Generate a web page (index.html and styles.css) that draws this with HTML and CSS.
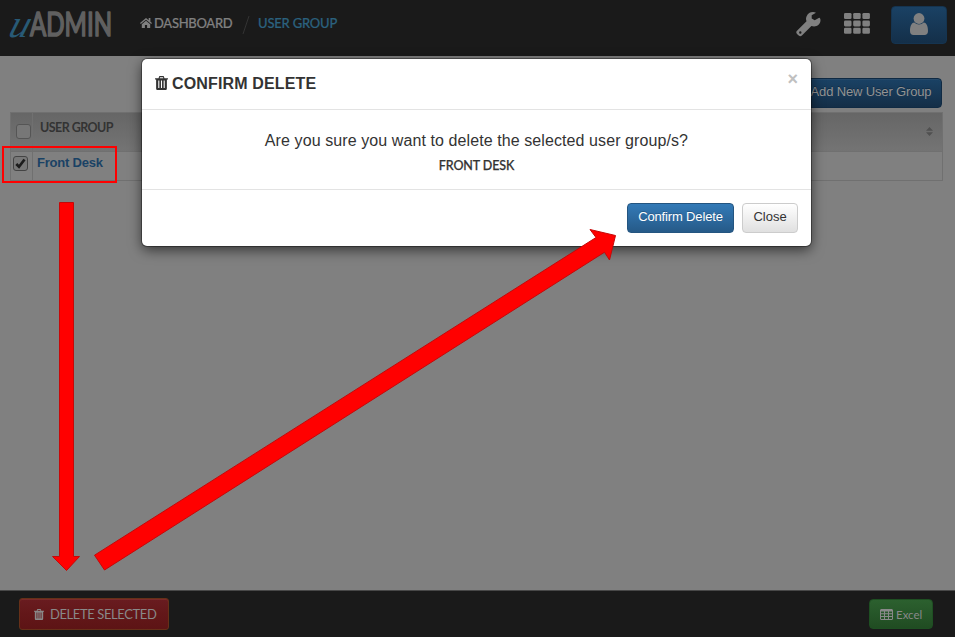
FILE: index.html
```html
<!DOCTYPE html>
<html lang="en">
<head>
<meta charset="utf-8">
<title>uAdmin - User Group</title>
<link rel="stylesheet" href="styles.css">
</head>
<body>
<div class="page">
  <header class="topbar">
    <svg class="logo" width="106" height="40" viewBox="0 0 106 40">
      <text class="logo-u" x="0" y="0" textLength="20" lengthAdjust="spacingAndGlyphs" transform="translate(0 29) skewX(-18)">u</text>
      <text class="logo-name" x="23" y="28" textLength="82" lengthAdjust="spacingAndGlyphs">ADMIN</text>
    </svg>
    <nav class="crumbs">
      <svg class="home" width="12" height="10" viewBox="0 0 12 10"><path d="M6 0 12 5 11.2 6 6 1.8.8 6 0 5zM8.7 0h1.7v3.7L8.7 2.4zM6 2.8l4.2 3.4V10H7.1V7H4.9v3H1.8V6.2z"/></svg>
      <a class="crumb">DASHBOARD</a>
      <svg class="slash" width="8" height="20" viewBox="0 0 8 20"><path d="M7 1 1 19"/></svg>
      <a class="crumb current">USER GROUP</a>
    </nav>
    <div class="tools">
      <svg class="wrench" width="25" height="25" viewBox="0 0 25 25"><path fill-rule="evenodd" d="M23.2 5.7l-4.5 2.6-3-1.7V3.2L20 .7C16.200-.8 12.100.6 10.500 4.500c-.7 1.600-.6 3.300 0 4.800L1 18.700c-1 1-1 2.200 0 3.200l1.700 1.700c1 1 2.200 1 3.200 0l9.500-9.500c4.500 1.700 9.100-1.200 9.100-6 0-1-.3-2.200-1.300-2.400zM4.300 19.300a1.200 1.200 0 1 1 0 2.400 1.200 1.200 0 0 1 0-2.400z"/></svg>
      <svg class="apps" width="26" height="21" viewBox="0 0 26 21"><g><rect width="7.500" height="6" rx="1.300"/><rect x="9.200" width="7.500" height="6" rx="1.300"/><rect x="18.400" width="7.500" height="6" rx="1.300"/><rect y="7.400" width="7.500" height="6" rx="1.300"/><rect x="9.200" y="7.400" width="7.500" height="6" rx="1.300"/><rect x="18.400" y="7.400" width="7.500" height="6" rx="1.300"/><rect y="14.800" width="7.500" height="6" rx="1.300"/><rect x="9.200" y="14.800" width="7.500" height="6" rx="1.300"/><rect x="18.400" y="14.800" width="7.500" height="6" rx="1.300"/></g></svg>
      <div class="user"><svg width="18" height="22" viewBox="0 0 18 22"><circle cx="9" cy="5.500" r="5.400"/><path d="M4.300 9.500C1.200 9.800 0 13.500 0 18c0 2.500 1.300 4 3.500 4h11c2.200 0 3.500-1.500 3.500-4 0-4.500-1.200-8.200-4.300-8.500a6.500 6.500 0 0 1-9.400 0z"/></svg></div>
    </div>
  </header>

  <main class="content">
    <div class="actions"><a class="btn add">Add New User Group</a></div>
    <div class="table">
      <div class="row head">
        <div class="cell pick"><span class="box"></span></div>
        <div class="cell label">USER GROUP</div>
        <svg class="sort" width="7" height="9" viewBox="0 0 7 9"><path d="M0 3.700 3.500 0 7 3.700zM0 5.300h7L3.500 9z"/></svg>
      </div>
      <div class="row item">
        <div class="cell pick"><span class="box checked"><svg width="11" height="11" viewBox="0 0 11 11"><path d="M1.300 6 4 8.700 9.500 1.500"/></svg></span></div>
        <div class="cell name">Front Desk</div>
      </div>
    </div>
  </main>

  <footer class="bottombar">
    <a class="delete"><svg class="bin" width="10" height="11" viewBox="0 0 12 13"><path fill-rule="evenodd" d="M4 0h4l.8 2H12v1.300h-1V11.500c0 1-.6 1.500-1.500 1.500h-7C1.600 13 1 12.500 1 11.500V3.300H0V2h3.200zM4.600 1.100 4.300 2h3.400l-.3-.9zM3 4.200v7h1v-7zm2.500 0v7h1v-7zm2.500 0v7h1v-7z"/></svg><span>DELETE SELECTED</span></a>
    <a class="excel"><svg width="13" height="11" viewBox="0 0 13 11"><path fill-rule="evenodd" d="M1 0h11l1 1v9l-1 1H1l-1-1V1zM1 2.500v1.800h3V2.500zm4 0v1.800h3V2.500zm4 0v1.800h3V2.500zM1 5.300v1.800h3V5.300zm4 0v1.800h3V5.300zm4 0v1.800h3V5.300zM1 8.100V10h3V8.100zm4 0V10h3V8.100zm4 0V10h3V8.100z"/></svg><span>Excel</span></a>
  </footer>

  <section class="modal">
    <div class="modal-head">
      <svg class="bin" width="13" height="14" viewBox="0 0 12 13"><path fill-rule="evenodd" d="M4 0h4l.8 2H12v1.300h-1V11.500c0 1-.6 1.500-1.500 1.500h-7C1.600 13 1 12.500 1 11.500V3.300H0V2h3.200zM4.600 1.100 4.300 2h3.400l-.3-.9zM3 4.200v7h1v-7zm2.500 0v7h1v-7zm2.500 0v7h1v-7z"/></svg>
      <h1>CONFIRM DELETE</h1>
      <span class="close">×</span>
    </div>
    <div class="modal-body">
      <p class="question">Are you sure you want to delete the selected user group/s?</p>
      <p class="target">FRONT DESK</p>
    </div>
    <div class="modal-foot">
      <a class="btn confirm">Confirm Delete</a>
      <a class="btn plain">Close</a>
    </div>
  </section>

  <div class="highlight"></div>
  <svg class="arrows" width="955" height="637" viewBox="0 0 955 637">
    <path d="M59.500 202.500h14v354h6L66.500 570.500l-14-14h7z"/>
    <path d="M94.500 555.200 596 237.500l-6-8L615.500 235.500 609.500 260l-5-7.800L104.500 570z"/>
  </svg>
</div>
</body>
</html>
```
FILE: styles.css
```css
* { box-sizing: border-box; }
body { margin: 0; font-family: "Liberation Sans", Arial, sans-serif; }
svg { display: block; flex: none; }
.page { position: relative; width: 955px; height: 637px; overflow: hidden; display: flex; flex-direction: column; background: #808080; }

.topbar { height: 56px; flex: none; display: flex; align-items: flex-start; padding: 6px 8px 0 7px; background: #1a1a1a; }
.logo { margin-top: 2px; overflow: visible; }
.logo-u { font: italic 39px "Liberation Serif", serif; fill: #285a76; }
.logo-name { font: 32px Lato, sans-serif; fill: #606060; stroke: #606060; stroke-width: 1.7; stroke-linejoin: round; }
.crumbs { display: flex; align-items: center; height: 34px; margin-left: 27px; font: 500 13px/34px Lato, sans-serif; }
.home { fill: #808080; margin-right: 2px; }
.crumb { color: #808080; width: 78px; white-space: nowrap; letter-spacing: -.3px; -webkit-text-stroke: .2px; }
.slash { fill: none; stroke: #333; margin: 3px 8px 0 10px; }
.crumb.current { color: #2b617e; width: 80px; letter-spacing: -.2px; }
.tools { margin-left: auto; display: flex; }
.tools svg { fill: #808080; }
.wrench { margin: 6px 23px 0 0; }
.apps { margin: 7px 21px 0 0; }
.user { width: 56px; height: 38px; border: 1px solid #153450; border-radius: 4px; background: linear-gradient(#1a4164, #142f49); display: flex; justify-content: center; padding-top: 6px; }

.content { flex: 1; padding: 22px 12px 0 10px; }
.actions { display: flex; justify-content: flex-end; padding-right: 1px; }
.btn { height: 30px; border-radius: 4px; border: 1px solid; font-size: 13px; line-height: 26px; text-align: center; white-space: nowrap; }
.add { width: 142px; letter-spacing: -.15px; color: #939393; border-color: #102a43; background: linear-gradient(#1a4265, #142e47); box-shadow: inset 0 1px #25496a; text-shadow: 0 -1px rgba(0,0,0,.25); }
.table { margin-top: 4px; border: 1px solid #707070; }
.row { display: flex; position: relative; }
.head { height: 38px; background: linear-gradient(#666, #747474); }
.item { height: 29px; border-top: 1px solid #707070; }
.pick { width: 22px; border-right: 1px solid #707070; }
.box { display: flex; width: 15px; height: 15px; margin: 11px 0 0 5px; border: 1px solid #555; border-radius: 3px; background: #777; }
.item .box { margin: 4px 0 0 2px; background: #777; border-color: #444; align-items: center; justify-content: center; }
.box svg { fill: none; stroke: #1c1c1c; stroke-width: 2.7; }
.label { font: bold 12.500px/30px Lato, sans-serif; color: #333; padding-left: 7px; letter-spacing: -.55px; }
.name { font-size: 13px; font-weight: bold; color: #1a4265; line-height: 22px; padding-left: 4px; letter-spacing: -.2px; }
.sort { fill: #505050; margin: 14px 9px 0 auto; }

.bottombar { height: 47px; flex: none; display: flex; justify-content: space-between; align-items: flex-start; padding: 7px 22px 0 19px; background: #1a1a1a; border-top: 1px solid #484848; }
.delete, .excel { display: flex; align-items: center; border: 1px solid; font-family: Lato, sans-serif; color: #898989; white-space: nowrap; }
.bottombar svg { fill: #898989; }
.delete { width: 150px; height: 32px; border-color: #663018; border-radius: 3px; padding-left: 14px; gap: 6px; font-size: 13px; letter-spacing: -.4px; background: linear-gradient(#691c20, #631719 50%, #5d1415); box-shadow: inset 0 1px #7a2a2a; }
.excel { width: 64px; height: 30px; margin-top: 1px; border-color: #1e4f22; border-radius: 4px; padding-left: 10px; gap: 3px; font-size: 11.500px; background: linear-gradient(#2c602f, #204c22); }

.modal { position: absolute; left: 142px; top: 59px; width: 669px; height: 187px; border-radius: 5px; background: #fff; box-shadow: 0 0 0 1px rgba(0,0,0,.35), 0 4px 13px rgba(0,0,0,.6); color: #333; }
.modal-head { height: 51px; display: flex; padding: 0 13px; border-bottom: 1px solid #e3e3e3; }
.modal-head .bin { fill: #333; margin: 17px 4px 0 0; }
h1 { margin: 0; font-size: 16px; line-height: 49px; letter-spacing: .15px; }
.close { margin-left: auto; font-size: 18px; font-weight: bold; line-height: 40px; color: #c0c0c0; }
.modal-body { height: 80px; padding-top: 20px; border-bottom: 1px solid #e3e3e3; text-align: center; }
.modal-body p { margin: 0; }
.question { font-size: 16px; line-height: 22px; letter-spacing: .09px; }
.target { font: 500 12.500px/28px Lato, sans-serif; letter-spacing: -.1px; -webkit-text-stroke: .25px; }
.modal-foot { display: flex; justify-content: flex-end; gap: 8px; padding: 13px 13px 0 0; }
.confirm { width: 107px; letter-spacing: -.15px; color: #fff; border-color: #245580; background: linear-gradient(#337ab7, #265a88); text-shadow: 0 -1px rgba(0,0,0,.2); }
.plain { width: 56px; border-color: #ccc; background: linear-gradient(#fff, #e0e0e0); }

.highlight { position: absolute; left: 2px; top: 146px; width: 115px; height: 37px; border: 2px solid #f00; }
.arrows { position: absolute; left: 0; top: 0; fill: #f00; stroke: #c50808; stroke-width: 1; }
```
